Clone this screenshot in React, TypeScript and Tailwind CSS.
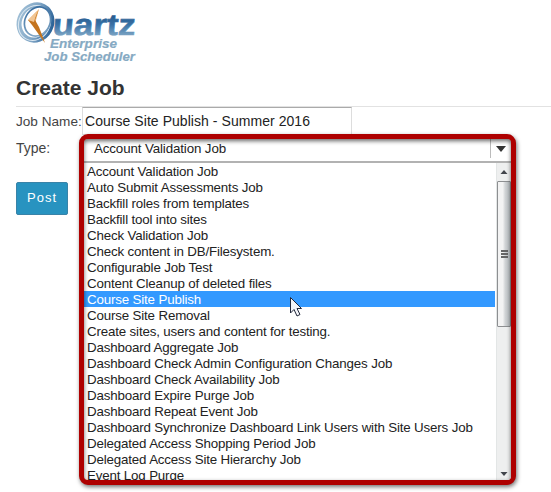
const jobs = [
  "Account Validation Job",
  "Auto Submit Assessments Job",
  "Backfill roles from templates",
  "Backfill tool into sites",
  "Check Validation Job",
  "Check content in DB/Filesystem.",
  "Configurable Job Test",
  "Content Cleanup of deleted files",
  "Course Site Publish",
  "Course Site Removal",
  "Create sites, users and content for testing.",
  "Dashboard Aggregate Job",
  "Dashboard Check Admin Configuration Changes Job",
  "Dashboard Check Availability Job",
  "Dashboard Expire Purge Job",
  "Dashboard Repeat Event Job",
  "Dashboard Synchronize Dashboard Link Users with Site Users Job",
  "Delegated Access Shopping Period Job",
  "Delegated Access Site Hierarchy Job",
  "Event Log Purge",
];

function Logo() {
  return (
    <svg className="block" width="124" height="66" viewBox="14 0 124 66" fontFamily="'Liberation Sans', Arial, sans-serif" fontWeight="bold">
      <defs>
        <linearGradient id="word" x1="0" y1="-20" x2="0" y2="2" gradientUnits="userSpaceOnUse">
          <stop offset="0" stopColor="#24588d" />
          <stop offset="0.45" stopColor="#3a72a6" />
          <stop offset="1" stopColor="#84aac7" />
        </linearGradient>
        <linearGradient id="ring" x1="0" y1="0.6" x2="1" y2="0.3">
          <stop offset="0" stopColor="#9cbcd4" />
          <stop offset="0.5" stopColor="#7fa5c5" />
          <stop offset="1" stopColor="#2d6499" />
        </linearGradient>
        <linearGradient id="rim" x1="0" y1="0" x2="0.6" y2="1">
          <stop offset="0" stopColor="#2d6499" />
          <stop offset="1" stopColor="#7fa5c5" />
        </linearGradient>
      </defs>
      <ellipse cx="35.5" cy="22.5" rx="16" ry="18" transform="rotate(28 35.5 22.5)" fill="none" stroke="url(#ring)" strokeWidth="5" />
      <ellipse cx="34.5" cy="23" rx="15.5" ry="18" transform="rotate(28 34.5 23)" fill="none" stroke="#dce8f1" strokeWidth="1" />
      <ellipse cx="37.5" cy="21.5" rx="12.5" ry="15" transform="rotate(28 37.5 21.5)" fill="white" stroke="url(#rim)" strokeWidth="1.7" />
      <path d="M39 9 L28 20 L36 26 L36 20 Z" fill="#edb779" />
      <path d="M39 9 L35 20 L39 27 L45 43 L32 25 L28 20 L34 20 Z" fill="#c4741e" />
      <path d="M37 11 L28 20 L34 22 Z" fill="#f1c694" />
      <g transform="translate(52 35) skewX(-5)">
        <text x="0" y="0" fontSize="30" textLength="83" lengthAdjust="spacingAndGlyphs" fill="url(#word)" stroke="url(#word)" strokeWidth="0.6">uartz</text>
      </g>
      <g fill="#86aac3" stroke="#86aac3" strokeWidth="0.2" fontStyle="italic">
        <text x="50" y="48" fontSize="13" textLength="67" lengthAdjust="spacingAndGlyphs">Enterprise</text>
        <text x="44" y="60.5" fontSize="13" textLength="91" lengthAdjust="spacingAndGlyphs">Job Scheduler</text>
      </g>
    </svg>
  );
}

function Scrollbar() {
  return (
    <div className="flex w-[15px] shrink-0 flex-col border-l border-[#e3e6e6] bg-[#eeefef]">
      <div className="flex h-[18px] shrink-0 items-center justify-center">
        <svg width="8" height="4" viewBox="0 0 8 4"><path d="M0.5 4 L4 0 L7.5 4Z" fill="#42454b" /></svg>
      </div>
      <div className="flex h-[146px] shrink-0 flex-col items-center gap-[1px] rounded-[1px] border border-[#8d8f91] bg-linear-to-r from-[#f3f3f3] from-40% via-[#d0d3d5] via-60% to-[#b5babd] pt-[68px]">
        <div className="h-[2px] w-[7px] bg-[#666]" />
        <div className="h-[2px] w-[7px] bg-[#666]" />
        <div className="h-[2px] w-[7px] bg-[#666]" />
      </div>
      <div className="mt-auto flex h-3 items-center justify-center">
        <svg width="8" height="4" viewBox="0 0 8 4"><path d="M0.5 0 L4 4 L7.5 0Z" fill="#42454b" /></svg>
      </div>
    </div>
  );
}

export default function App() {
  return (
    <main className="relative h-[492px] w-[551px] overflow-hidden bg-white pl-4 font-['Liberation_Sans',Arial,sans-serif] text-[13px] text-[#222]">
      <div className="-ml-[2px] h-[66px]"><Logo /></div>
      <h1 className="h-10 pt-[9px] text-[21px] leading-[26px] font-bold text-[#333]">Create Job</h1>
      <div className="flex h-[28px] border-t border-[#e2e2e2]">
        <label className="w-[66px] shrink-0 pt-[7px] text-[13.6px] leading-4 whitespace-nowrap text-[#444]">Job Name:</label>
        <div className="h-[28px] w-[270px] border border-[#ddd] border-t-[#aaa] pt-[4px] pl-[2px] text-[14px] leading-[18px] tracking-[0.05px] whitespace-nowrap">Course Site Publish - Summer 2016</div>
      </div>
      <div className="flex">
        <div className="w-[63px] shrink-0">
          <div className="h-12 pt-[6px] text-[14px] leading-4 text-[#444]">Type:</div>
          <button className="block h-[33px] w-[52px] rounded-[2px] border border-[#3983a8] bg-[#2893c0] pb-[2px] text-[13px] leading-[29px] tracking-[1px] text-white">Post</button>
        </div>
        <div className="relative z-10 h-[351px] w-[437px] shrink-0 rounded-[9px] border-5 border-[#ae0000] bg-white shadow-[1px_2px_4px_rgba(0,0,0,0.55)]">
          <div className="flex h-full flex-col overflow-hidden rounded-[4px]">
            <div className="flex h-6 shrink-0 border-b-2 border-[#b2b2b2]">
              <div className="flex-1 pt-[2px] pl-[10px] text-[13.33px] leading-4 tracking-[-0.12px]">Account Validation Job</div>
              <div className="flex h-[19px] w-[21px] items-center justify-center border-l border-[#bbb]">
                <svg width="10" height="6" viewBox="0 0 10 6"><path d="M0 0H10L5 6Z" fill="#333" /></svg>
              </div>
            </div>
            <div className="flex min-h-0 flex-1">
              <ul className="mr-[1px] flex-1 overflow-hidden text-[13.33px] tracking-[-0.16px]">
                {jobs.map((job) => (
                  <li key={job} className={job === "Course Site Publish" ? "h-4 bg-[#3399ff] pl-[3px] leading-[17px] whitespace-nowrap text-white" : "h-4 pl-[3px] leading-[17px] whitespace-nowrap"}>{job}</li>
                ))}
              </ul>
              <Scrollbar />
            </div>
          </div>
          <div className="pointer-events-none absolute inset-0 rounded-[4px] shadow-[inset_0_2px_4px_rgba(0,0,0,0.6)]" />
        </div>
      </div>
      <svg className="absolute top-[296px] left-[289px] z-20" width="14" height="22" viewBox="0 0 14 22">
        <path d="M1.5 1.5V17L5 13.5L8 20L11 18.5L8 12.5H12.5Z" fill="#f4f5f9" stroke="#22283b" strokeWidth="1" />
      </svg>
    </main>
  );
}
